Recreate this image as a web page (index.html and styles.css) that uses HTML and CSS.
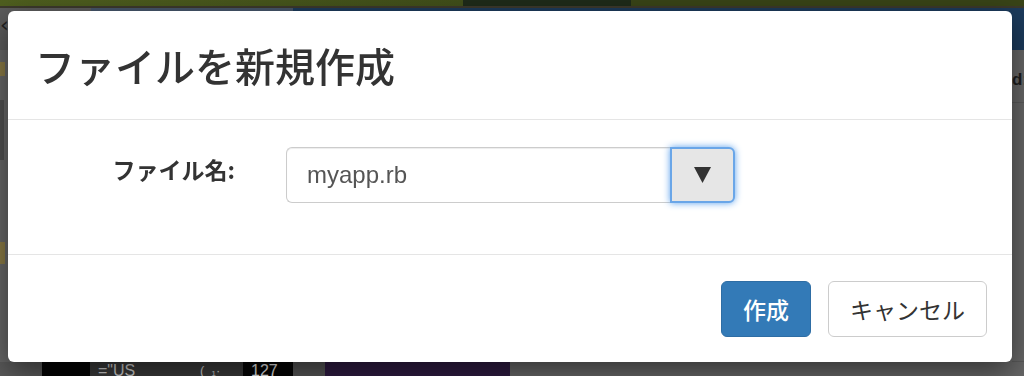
FILE: index.html
```html
<!DOCTYPE html>
<html lang="ja">
<head>
  <meta charset="UTF-8">
  <title>ファイルを新規作成</title>
  <link rel="stylesheet" href="styles.css">
</head>
<body>
  <!-- pagina detras del modal -->
  <div class="page">
    <div class="top-bar">
      <span class="seg-olive"></span>
      <span class="seg-dark"></span>
      <span class="seg-olive2"></span>
    </div>
    <div class="top-line"></div>
    <div class="nav-bar">
      <span class="nav-back">&lsaquo;</span>
      <span class="nav-mid"></span>
      <span class="nav-blue"></span>
    </div>
    <div class="main-area">
      <div class="side-left">
        <span class="tag-yellow"></span>
        <span class="tag-grey"></span>
        <span class="tag-yellow low"></span>
      </div>
      <div class="side-right">
        <span class="side-label">d:</span>
      </div>
    </div>
    <div class="bottom-row">
      <span class="b-grey"></span>
      <span class="b-black"></span>
      <span class="b-text">="US</span>
      <span class="b-text small">( &nbsp;₁·</span>
      <span class="b-count">127</span>
      <span class="b-gap"></span>
      <span class="b-purple"></span>
    </div>
  </div>

  <!-- Modal nuevo archivo -->
  <div class="modal">
    <div class="modal-header">
      <h4 class="modal-title">ファイルを新規作成</h4>
    </div>
    <div class="modal-body">
      <div class="form-row">
        <label class="control-label" for="filename">ファイル名:</label>
        <div class="input-group">
          <input type="text" id="filename" class="form-control" value="myapp.rb">
          <button class="btn-dropdown" type="button">
            <svg width="17" height="16" viewBox="0 0 17 16"><polygon points="0,0 17,0 8.5,16" fill="#333"/></svg>
          </button>
        </div>
      </div>
    </div>
    <div class="modal-footer">
      <button class="btn btn-primary" type="button">作成</button>
      <button class="btn btn-default" type="button">キャンセル</button>
    </div>
  </div>
</body>
</html>
```

FILE: styles.css
```css
body {
  margin: 0;
  font-family: "Noto Sans CJK JP", sans-serif;
  background-color: #666;
  overflow: hidden;
}

.page {
  display: flex;
  flex-direction: column;
  height: 376px;
  background-color: #676767;
}

.top-bar {
  display: flex;
  height: 6px;
}

.seg-olive {
  width: 463px;
  background: linear-gradient(to right, #4f5f1f, #414f1a);
}

.seg-dark {
  width: 168px;
  background-color: #1f2b19;
}

.seg-olive2 {
  flex: 1;
  background-color: #394417;
}

.top-line {
  height: 2px;
  background-color: #3c392c;
}

.nav-bar {
  display: flex;
  height: 42px;
}

.nav-back {
  width: 91px;
  background-color: #5c5c5c;
  color: #222;
  font-family: "DejaVu Sans", sans-serif;
  font-size: 22px;
  line-height: 30px;
  padding-top: 2px;
}

.nav-mid {
  width: 202px;
  background-color: #46566a;
}

.nav-blue {
  flex: 1;
  background-color: #1c3b5c;
}

.main-area {
  flex: 1;
  display: flex;
  justify-content: space-between;
}

.side-left {
  width: 8px;
  display: flex;
  flex-direction: column;
  gap: 24px;
  padding-top: 12px;
}

.tag-yellow {
  width: 5px;
  height: 14px;
  background-color: #8a7a45;
}

.tag-yellow.low {
  margin-top: 58px;
  height: 22px;
}

.tag-grey {
  width: 4px;
  height: 60px;
  background-color: #505050;
}

.side-right {
  width: 12px;
  border-bottom: 1px solid #5a5a5a;
}

.side-label {
  display: block;
  padding-top: 20px;
  padding-bottom: 12px;
  border-bottom: 1px solid #5a5a5a;
  color: #1e1e1e;
  font-family: "Liberation Sans", sans-serif;
  font-weight: bold;
  font-size: 17px;
  line-height: 20px;
}

.bottom-row {
  display: flex;
  height: 14px;
  color: #cfcfcf;
  font-family: "Liberation Sans", sans-serif;
  font-size: 16px;
  line-height: 18px;
  overflow: hidden;
}

.bottom-row span {
  flex-shrink: 0;
  box-sizing: border-box;
  white-space: nowrap;
  overflow: hidden;
}

.b-grey {
  width: 42px;
  background-color: #5a5a5a;
}

.b-black {
  width: 48px;
  background-color: #050505;
}

.b-text {
  width: 78px;
  background-color: #3a3a3a;
  padding-left: 8px;
}

.b-text.small {
  width: 75px;
  padding-left: 32px;
  font-size: 13px;
}

.b-count {
  width: 50px;
  background-color: #050505;
  color: #e8e8e8;
  padding-left: 8px;
}

.b-gap {
  width: 32px;
  background-color: #555;
}

.b-purple {
  width: 185px;
  background-color: #2f1b42;
}

/* Modal */
.modal {
  position: fixed;
  top: 11px;
  left: 8px;
  width: 1004px;
  background-color: #fff;
  border-radius: 6px;
  box-shadow: 0 10px 30px rgba(0, 0, 0, 0.5);
  color: #333;
}

.modal-header {
  height: 108px;
  padding: 0 27px;
  display: flex;
  align-items: center;
  border-bottom: 1px solid #e5e5e5;
}

.modal-title {
  margin: 0;
  font-size: 40px;
  font-weight: 500;
  line-height: 48px;
}

.modal-body {
  height: 107px;
  padding-top: 27px;
  border-bottom: 1px solid #e5e5e5;
}

.form-row {
  display: flex;
  align-items: flex-start;
}

.control-label {
  width: 227px;
  margin-right: 51px;
  padding-top: 6px;
  text-align: right;
  font-size: 23px;
  font-weight: bold;
  line-height: 33px;
}

.input-group {
  display: flex;
  width: 449px;
  height: 56px;
}

.form-control {
  flex: 1;
  min-width: 0;
  height: 56px;
  box-sizing: border-box;
  padding: 0 20px;
  border: 1px solid #ccc;
  border-right: none;
  border-radius: 6px 0 0 6px;
  font-family: "Liberation Sans", sans-serif;
  font-size: 24px;
  color: #555;
  outline: none;
  box-shadow: inset 0 1px 1px rgba(0, 0, 0, 0.075);
}

.btn-dropdown {
  width: 65px;
  height: 56px;
  box-sizing: border-box;
  display: flex;
  align-items: center;
  justify-content: center;
  padding: 0;
  background-color: #e6e6e6;
  border: 2px solid #6aa6e8;
  border-radius: 0 6px 6px 0;
  box-shadow: 0 0 7px rgba(82, 156, 236, 0.95);
  cursor: pointer;
}

.modal-footer {
  height: 107px;
  box-sizing: border-box;
  padding: 26px 25px 0 0;
  display: flex;
  justify-content: flex-end;
  align-items: flex-start;
  gap: 17px;
}

.btn {
  height: 56px;
  padding: 0 21px;
  border: 1px solid transparent;
  border-radius: 6px;
  font-family: "Noto Sans CJK JP", sans-serif;
  font-size: 23px;
  line-height: 1;
  cursor: pointer;
}

.btn-primary {
  background-color: #337ab7;
  border-color: #2e6da4;
  color: #fff;
  font-weight: 500;
}

.btn-default {
  background-color: #fff;
  border-color: #ccc;
  color: #333;
}
```
